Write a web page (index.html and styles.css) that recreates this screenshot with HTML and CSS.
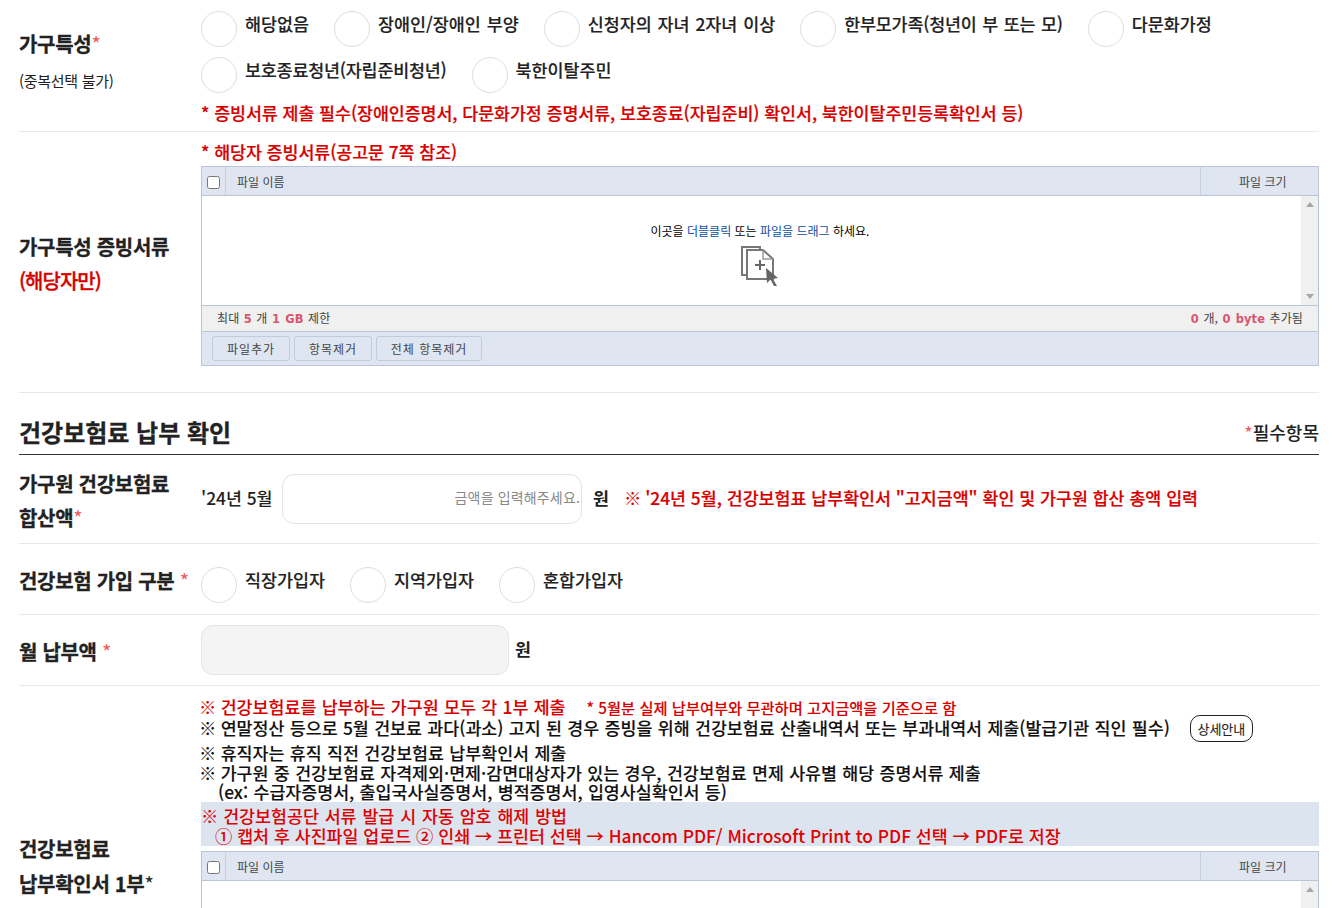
FILE: index.html
```html
<!DOCTYPE html>
<html lang="ko">

<head>
  <meta charset="UTF-8">
  <meta name="viewport" content="width=device-width, initial-scale=1.0">
  <title>건강보험료 납부 확인</title>
  <link rel="stylesheet" href="styles.css">
</head>

<body>
  <div class="wrap">
    <div class="row row_family">
      <div class="row_label">
        <p>가구특성<span class="req">*</span></p>
        <p class="label_sub">(중복선택 불가)</p>
      </div>
      <div class="row_body">
        <div class="radio_group">
          <label class="radio_item"><input type="radio" name="family"><span>해당없음</span></label>
          <label class="radio_item"><input type="radio" name="family"><span>장애인/장애인 부양</span></label>
          <label class="radio_item"><input type="radio" name="family"><span>신청자의 자녀 2자녀 이상</span></label>
          <label class="radio_item tight"><input type="radio" name="family"><span>한부모가족(청년이 부 또는 모)</span></label>
          <label class="radio_item"><input type="radio" name="family"><span>다문화가정</span></label>
          <label class="radio_item tight"><input type="radio" name="family"><span>보호종료청년(자립준비청년)</span></label>
          <label class="radio_item"><input type="radio" name="family"><span>북한이탈주민</span></label>
        </div>
        <p class="note_red note_family">* 증빙서류 제출 필수(장애인증명서, 다문화가정 증명서류, 보호종료(자립준비) 확인서, 북한이탈주민등록확인서 등)</p>
      </div>
    </div>

    <div class="row row_proof">
      <div class="row_label">
        <p>가구특성 증빙서류</p>
        <p class="label_red">(해당자만)</p>
      </div>
      <div class="row_body">
        <p class="note_red note_proof">* 해당자 증빙서류(공고문 7쪽 참조)</p>
        <div class="uploader">
          <div class="up_head">
            <div class="up_check"><input type="checkbox"></div>
            <div class="up_name">파일 이름</div>
            <div class="up_size">파일 크기</div>
          </div>
          <div class="up_list">
            <div class="up_drop">
              <p>이곳을 <em>더블클릭</em> 또는 <em>파일을 드래그</em> 하세요.</p>
              <svg class="up_icon" width="38" height="40" viewBox="0 0 38 40">
                <path d="M6 29H1V1H19V4" fill="none" stroke="#777" stroke-width="2"/>
                <path d="M6 4H22L32 13V33H6Z" fill="#fff" stroke="#777" stroke-width="2"/>
                <path d="M22 4V13H32" fill="none" stroke="#999" stroke-width="1.5"/>
                <path d="M19 14V24M14 19H24" fill="none" stroke="#666" stroke-width="2"/>
                <path d="M25 22L37 32L32 33L36 40H33L29.500 33.500L26 37Z" fill="#666"/>
              </svg>
            </div>
            <div class="up_scroll">
              <span class="arrow_up"></span>
              <span class="arrow_down"></span>
            </div>
          </div>
          <div class="up_info">
            <span>최대 <b>5</b> 개 <b>1 GB</b> 제한</span>
            <span><b>0</b> 개, <b>0 byte</b> 추가됨</span>
          </div>
          <div class="up_btns">
            <button type="button">파일추가</button>
            <button type="button">항목제거</button>
            <button type="button" class="btn_wide">전체 항목제거</button>
          </div>
        </div>
      </div>
    </div>

    <div class="section_title">
      <h2>건강보험료 납부 확인</h2>
      <p><span class="req">*</span>필수항목</p>
    </div>

    <div class="row row_total">
      <div class="row_label">
        <p>가구원 건강보험료</p>
        <p>합산액<span class="req">*</span></p>
      </div>
      <div class="row_body row_inline">
        <span class="month">'24년 5월</span>
        <input class="text_input" type="text" placeholder="금액을 입력해주세요.">
        <strong class="won">원</strong>
        <p class="note_total"><span class="mark">※</span> '24년 5월, 건강보험표 납부확인서 "고지금액" 확인 및 가구원 합산 총액 입력</p>
      </div>
    </div>

    <div class="row row_join">
      <div class="row_label">
        <p>건강보험 가입 구분 <span class="req">*</span></p>
      </div>
      <div class="row_body">
        <div class="radio_group">
          <label class="radio_item"><input type="radio" name="join"><span>직장가입자</span></label>
          <label class="radio_item"><input type="radio" name="join"><span>지역가입자</span></label>
          <label class="radio_item"><input type="radio" name="join"><span>혼합가입자</span></label>
        </div>
      </div>
    </div>

    <div class="row row_month">
      <div class="row_label">
        <p>월 납부액 <span class="req">*</span></p>
      </div>
      <div class="row_body row_inline">
        <input class="text_input input_off" type="text" disabled>
        <strong class="won">원</strong>
      </div>
    </div>

    <div class="row row_paper">
      <div class="row_label">
        <p>건강보험료</p>
        <p>납부확인서 1부<span class="req_dark">*</span></p>
      </div>
      <div class="row_body">
        <ul class="guide">
          <li class="guide_red"><span class="mark">※</span> 건강보험료를 납부하는 가구원 모두 각 1부 제출<small>* 5월분 실제 납부여부와 무관하며 고지금액을 기준으로 함</small></li>
          <li class="guide_btn"><span class="guide_text"><span class="mark">※</span> 연말정산 등으로 5월 건보료 과다(과소) 고지 된 경우 증빙을 위해 건강보험료 산출내역서 또는 부과내역서 제출(발급기관 직인 필수)</span><button type="button" class="btn_info">상세안내</button></li>
          <li><span class="mark">※</span> 휴직자는 휴직 직전 건강보험료 납부확인서 제출</li>
          <li><span class="mark">※</span> 가구원 중 건강보험료 자격제외·면제·감면대상자가 있는 경우, 건강보험료 면제 사유별 해당 증명서류 제출</li>
          <li class="guide_ex">(ex: 수급자증명서, 출입국사실증명서, 병적증명서, 입영사실확인서 등)</li>
        </ul>
        <div class="pdf_box">
          <p class="pdf_title"><span class="mark">※</span> 건강보험공단 서류 발급 시 자동 암호 해제 방법</p>
          <p class="pdf_step">① 캡처 후 사진파일 업로드 ② 인쇄 → 프린터 선택 → Hancom PDF/ Microsoft Print to PDF 선택 → PDF로 저장</p>
        </div>
        <div class="uploader">
          <div class="up_head">
            <div class="up_check"><input type="checkbox"></div>
            <div class="up_name">파일 이름</div>
            <div class="up_size">파일 크기</div>
          </div>
          <div class="up_list">
            <div class="up_drop"></div>
            <div class="up_scroll">
              <span class="arrow_up"></span>
              <span class="arrow_down"></span>
            </div>
          </div>
        </div>
      </div>
    </div>
  </div>
</body>

</html>
```

FILE: styles.css
```css
* {
  margin: 0;
  padding: 0;
  box-sizing: border-box;
}

html,
body {
  height: 100%;
  overflow: hidden;
}

body {
  background: #fff;
  color: #222;
  font-family: "Noto Sans CJK KR", "Liberation Sans", sans-serif;
  font-size: 17.33px;
}

.wrap {
  width: 1300px;
  margin-left: 19px;
}

/* rows */
.row {
  display: flex;
  align-items: center;
  border-bottom: 1px solid #e8e8e8;
}

.row_label {
  flex: 0 0 182px;
  font-size: 20px;
  font-weight: 700;
  letter-spacing: -0.3px;
  line-height: 34px;
  -webkit-text-stroke: 0.3px;
}

.row_body {
  flex: 1;
  min-width: 0;
}

.row_inline {
  display: flex;
  align-items: center;
}

.req {
  color: #f05a5a;
  font-weight: 400;
  -webkit-text-stroke: 0;
}

.req_dark {
  font-weight: 400;
  -webkit-text-stroke: 0;
}

.label_sub {
  padding-top: 3px;
  font-size: 15px;
  font-weight: 400;
  letter-spacing: -0.3px;
  -webkit-text-stroke: 0;
}

.label_red {
  color: #d70000;
  font-weight: 500;
  letter-spacing: -1px;
}

.row_family {
  height: 132px;
  padding-top: 11px;
  align-items: flex-start;
}

.row_family .row_label {
  padding-top: 16px;
}

.row_proof {
  height: 261px;
  padding-top: 8px;
  align-items: flex-start;
}

.row_proof .row_label {
  padding-top: 90px;
}

.row_total {
  height: 89px;
}

.row_total .row_label {
  padding-top: 4px;
}

.row_join {
  height: 71px;
}

.row_join .row_label {
  padding-top: 3px;
}

.row_join .row_body {
  padding-top: 12px;
}

.row_month {
  height: 71px;
}

.row_month .row_label {
  padding-top: 4px;
}

.row_paper {
  align-items: center;
  border-bottom: 0;
  padding-top: 11px;
}

.row_paper .row_label {
  margin-bottom: 17px;
  line-height: 35px;
}

/* radios */
.radio_group {
  display: flex;
  flex-wrap: wrap;
  gap: 10px 25px;
}

.radio_item {
  display: flex;
  align-items: flex-start;
  gap: 8px;
  height: 36px;
  font-size: 17.4px;
  font-weight: 500;
  word-spacing: 1px;
}

.radio_item.tight {
  letter-spacing: -0.2px;
}

.radio_item input {
  appearance: none;
  width: 36px;
  height: 36px;
  background: #fff;
  border: 1px solid #ddd;
  border-radius: 50%;
}

.radio_item span {
  line-height: 25px;
  -webkit-text-stroke: 0.15px;
}

/* notes */
.note_red {
  color: #d70000;
  font-weight: 500;
  letter-spacing: -0.05px;
  -webkit-text-stroke: 0.2px;
}

.note_family {
  margin-top: 8px;
  line-height: 24px;
}

.note_proof {
  line-height: 24px;
  margin-bottom: 2px;
}

/* file uploader */
.uploader {
  border: 1px solid #b9c4d6;
  font-size: 12px;
  color: #444;
  height: 200px;
}

.up_head {
  display: flex;
  height: 29px;
  line-height: 29px;
  background: #dfe6f1;
  border-bottom: 1px solid #b9c4d6;
}

.up_check {
  flex: 0 0 24px;
  border-right: 1px solid #c6d0df;
  display: flex;
  justify-content: center;
  align-items: center;
}

.up_check input {
  width: 13px;
  height: 13px;
  margin-top: 3px;
}

.up_name {
  flex: 1;
  padding-left: 11px;
}

.up_size {
  flex: 0 0 118px;
  border-left: 1px solid #c6d0df;
  padding-left: 38px;
}

.up_list {
  display: flex;
  height: 109px;
  background: #fff;
}

.up_drop {
  flex: 1;
  padding: 26px 0 0 17px;
  text-align: center;
  color: #000;
}

.up_drop em {
  color: #0b4ea2;
  font-style: normal;
}

.up_icon {
  display: block;
  margin: 7px auto 0;
}

.up_scroll {
  flex: 0 0 17px;
  display: flex;
  flex-direction: column;
  justify-content: space-between;
  align-items: center;
  padding: 6px 0;
  background: #f0f0f0;
}

.arrow_up,
.arrow_down {
  width: 0;
  height: 0;
  border-left: 4px solid transparent;
  border-right: 4px solid transparent;
}

.arrow_up {
  border-bottom: 5px solid #a6a6a6;
}

.arrow_down {
  border-top: 5px solid #a6a6a6;
}

.up_info {
  display: flex;
  justify-content: space-between;
  height: 27px;
  line-height: 24px;
  padding: 0 15px;
  background: #f0f0f0;
  border-top: 1px solid #b9c4d6;
  border-bottom: 1px solid #b9c4d6;
  letter-spacing: 0.1px;
  word-spacing: 1px;
}

.up_info b {
  color: #d9566f;
  font-family: "DejaVu Sans", sans-serif;
  font-size: 11.5px;
}

.up_btns {
  display: flex;
  gap: 4px;
  height: 33px;
  padding: 4px 10px;
  background: #dfe6f1;
}

.up_btns button {
  width: 78px;
  height: 25px;
  background: #dfe6f1;
  border: 1px solid #c0cbdb;
  border-radius: 3px;
  color: #444;
  font-family: inherit;
  font-size: 12px;
  letter-spacing: 1px;
}

.up_btns .btn_wide {
  width: 106px;
}

/* section title */
.section_title {
  display: flex;
  justify-content: space-between;
  align-items: center;
  height: 62px;
  padding-top: 16px;
  border-bottom: 1px solid #333;
}

.section_title h2 {
  font-size: 24px;
  font-weight: 700;
  -webkit-text-stroke: 0.3px;
}

.section_title p {
  font-size: 18px;
  font-weight: 500;
}

/* inputs */
.month {
  width: 81px;
  padding-bottom: 3px;
  font-weight: 500;
}

.text_input {
  width: 300px;
  height: 50px;
  padding: 0 1px 5px 0;
  background: #fff;
  border: 1px solid #e4e4e4;
  border-radius: 12px;
  color: #222;
  font-family: inherit;
  font-size: 14px;
  letter-spacing: 0.15px;
  text-align: right;
}

.text_input::placeholder {
  color: #888;
}

.input_off {
  width: 308px;
  background: #f4f4f4;
}

.won {
  margin: 0 17px 0 11px;
  padding-bottom: 3px;
  font-weight: 700;
}

.row_month .won {
  margin: 0 0 0 6px;
}

.note_total {
  padding-bottom: 3px;
  color: #d70000;
  font-weight: 500;
  -webkit-text-stroke: 0.2px;
}

.mark {
  margin: 0 -1px 0 -2px;
  font-weight: 400;
  -webkit-text-stroke: 0;
}

/* guide */
.guide {
  list-style: none;
  color: #111;
  font-weight: 500;
  line-height: 20px;
  word-spacing: 0.5px;
  -webkit-text-stroke: 0.1px;
}

.guide_red {
  color: #d70000;
}

.guide_red small {
  margin-left: 21px;
  font-size: 15.3px;
  word-spacing: 0;
}

.guide_btn {
  display: flex;
  align-items: center;
  margin: -2px 0 1px;
}

.guide_text {
  padding-bottom: 2px;
}

.guide_ex {
  margin-top: -1px;
  padding-left: 17px;
}

.btn_info {
  width: 63px;
  height: 27px;
  margin-left: 20px;
  background: #fff;
  border: 1px solid #222;
  border-radius: 10px;
  color: #222;
  font-family: inherit;
  font-size: 13px;
}

.pdf_box {
  height: 44px;
  margin: 0 0 5px;
  padding: 4px 0 0 2px;
  background: #dce4ef;
  color: #e00000;
  font-weight: 500;
  line-height: 20px;
}

.pdf_title {
  word-spacing: 1px;
}

.pdf_step {
  padding-left: 12px;
}
```
